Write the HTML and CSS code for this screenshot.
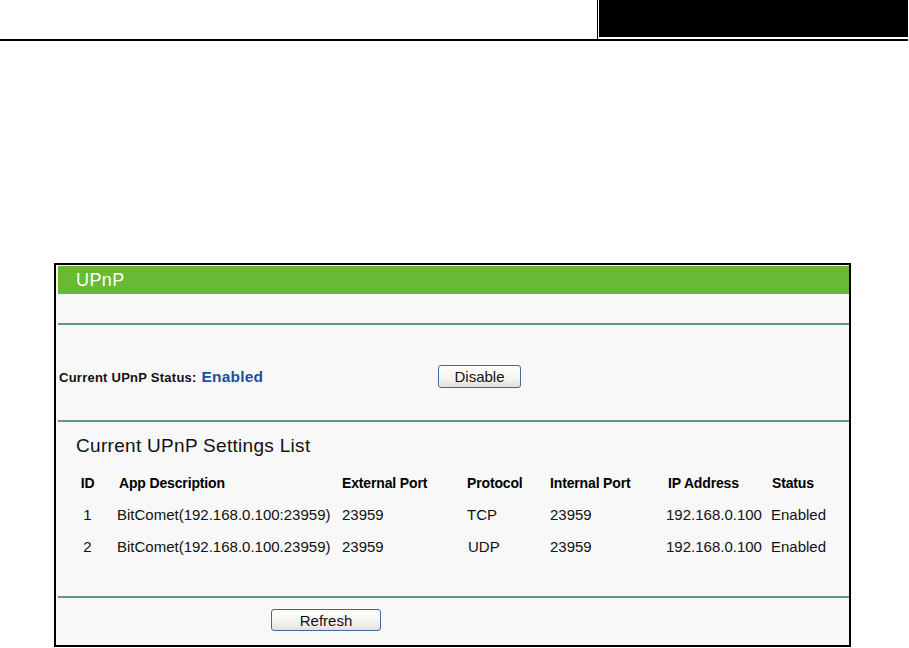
FILE: index.html
```html
<!DOCTYPE html>
<html>
<head>
<meta charset="utf-8">
<title>UPnP</title>
<link rel="stylesheet" href="styles.css">
</head>
<body>
<div class="topbar">
  <div class="tab"><div class="tab-fill"></div></div>
</div>
<div class="panel">
  <div class="panel-title">UPnP</div>
  <div class="spacer"></div>
  <div class="rule"></div>
  <div class="status-row">
    <div class="status-label">Current UPnP Status: <span class="status-value">Enabled</span></div>
    <button class="btn btn-disable">Disable</button>
  </div>
  <div class="rule"></div>
  <div class="list-title">Current UPnP Settings List</div>
  <div class="grid">
    <div class="th c-id">ID</div>
    <div class="th c-app">App Description</div>
    <div class="th">External Port</div>
    <div class="th">Protocol</div>
    <div class="th">Internal Port</div>
    <div class="th c-ip">IP Address</div>
    <div class="th c-st">Status</div>

    <div class="td c-id">1</div>
    <div class="td c-app">BitComet(192.168.0.100:23959)</div>
    <div class="td">23959</div>
    <div class="td">TCP</div>
    <div class="td">23959</div>
    <div class="td">192.168.0.100</div>
    <div class="td">Enabled</div>

    <div class="td c-id">2</div>
    <div class="td c-app">BitComet(192.168.0.100.23959)</div>
    <div class="td">23959</div>
    <div class="td c-udp">UDP</div>
    <div class="td">23959</div>
    <div class="td">192.168.0.100</div>
    <div class="td">Enabled</div>
  </div>
  <div class="rule"></div>
  <div class="refresh-row">
    <button class="btn btn-refresh">Refresh</button>
  </div>
</div>
</body>
</html>
```
FILE: styles.css
```css
html, body {
  margin: 0;
  padding: 0;
  background: #ffffff;
  font-family: "Liberation Sans", Arial, sans-serif;
  color: #000;
}

.topbar {
  width: 908px;
  height: 39px;
  border-bottom: 2px solid #000;
  display: flex;
  justify-content: flex-end;
}

.tab {
  width: 311px;
  height: 39px;
  border-left: 1px solid #000;
  padding-left: 1px;
  box-sizing: border-box;
}

.tab-fill {
  height: 37px;
  background: #000;
}

.panel {
  margin: 222px 0 0 54px;
  width: 797px;
  box-sizing: border-box;
  border: 2px solid #000;
  background: #f8f8f8;
  padding: 1px 0 0 2px;
  height: 384px;
}

.panel-title {
  height: 28px;
  line-height: 28px;
  background: #68b934;
  color: #fff;
  font-size: 18px;
  padding-left: 18px;
  letter-spacing: 0.4px;
}

.spacer {
  height: 29px;
}

.rule {
  height: 2px;
  background: #5e9b76;
}

.status-row {
  display: flex;
  align-items: center;
  padding: 40px 0 32px 1px;
  height: 23px;
}

.status-label {
  width: 379px;
  font-size: 13px;
  font-weight: bold;
  color: #111;
  letter-spacing: 0.25px;
}

.status-value {
  color: #1d4f9c;
  font-size: 15.5px;
  margin-left: 1px;
  letter-spacing: 0.2px;
}

.btn {
  font-family: "Liberation Sans", Arial, sans-serif;
  font-size: 15px;
  color: #111;
  border: 1px solid #3e6c98;
  border-radius: 3px;
  background: linear-gradient(#ffffff 0%, #f4f3ee 60%, #e3e1d8 100%);
  padding: 0;
  margin: 0;
  box-sizing: border-box;
}

.btn-disable {
  width: 83px;
  height: 23px;
}

.list-title {
  font-size: 19px;
  line-height: 22px;
  margin-top: 13px;
  padding-left: 18px;
  color: #111;
  letter-spacing: 0.3px;
}

.grid {
  display: grid;
  grid-template-columns: 59px 225px 125px 83px 116px 105px 78px;
  grid-auto-rows: 32px;
  margin-top: 10px;
  font-size: 15px;
  line-height: 32px;
  height: 129px;
}

.th {
  font-weight: bold;
  font-size: 14px;
  letter-spacing: -0.15px;
  white-space: nowrap;
}

.td {
  white-space: nowrap;
  color: #111;
}

.c-id {
  text-align: center;
}

.th.c-app {
  padding-left: 2px;
}

.th.c-ip {
  padding-left: 2px;
}

.th.c-st {
  padding-left: 1px;
}

.c-udp {
  padding-left: 1px;
}

.refresh-row {
  padding: 11px 0 0 213px;
}

.btn-refresh {
  width: 110px;
  height: 22px;
}
```
